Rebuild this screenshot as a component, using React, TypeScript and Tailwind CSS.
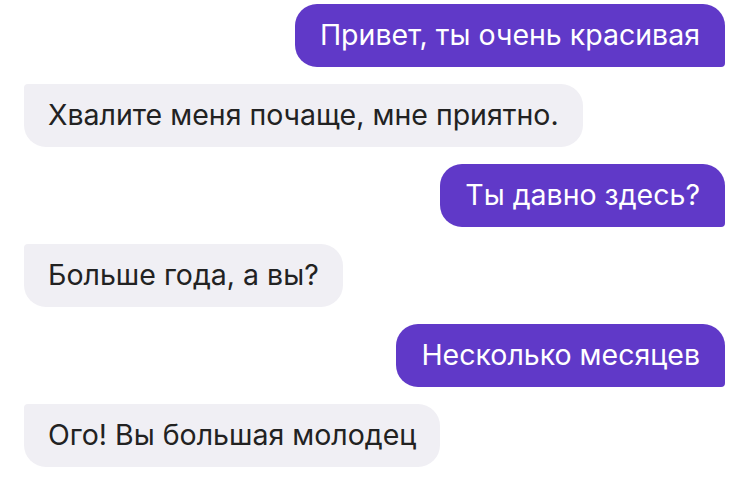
const messages = [
  { me: true, text: "Привет, ты очень красивая" },
  { me: false, text: "Хвалите меня почаще, мне приятно." },
  { me: true, text: "Ты давно здесь?" },
  { me: false, text: "Больше года, а вы?" },
  { me: true, text: "Несколько месяцев" },
  { me: false, text: "Ого! Вы большая молодец" },
];

function Bubble({ me, text }: { me: boolean; text: string }) {
  if (me) {
    return (
      <div className="self-end h-[63px] flex items-center px-[25px] bg-[#6039c8] text-white rounded-[22px] rounded-br-[4px]">
        {text}
      </div>
    );
  }
  return (
    <div className="self-start h-[63px] flex items-center px-[24px] bg-[#f0eff4] text-[#222222] rounded-[22px] rounded-tl-[4px]">
      {text}
    </div>
  );
}

export default function App() {
  return (
    <div className="w-[750px] h-[477px] bg-white flex flex-col gap-[17px] pt-[4px] pl-[24px] pr-[25px] font-['Inter',sans-serif] text-[28.5px]">
      {messages.map((m, i) => (
        <Bubble key={i} me={m.me} text={m.text} />
      ))}
    </div>
  );
}
